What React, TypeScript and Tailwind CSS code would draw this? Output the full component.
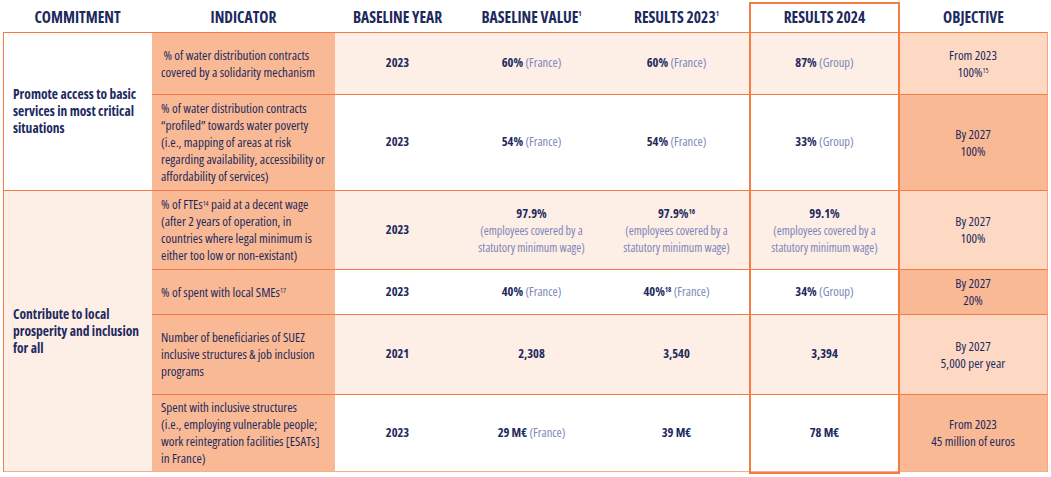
import React from "react";

const font = { fontFamily: '"Open Sans", sans-serif' };

type Row = {
  indicator: React.ReactNode;
  year: string;
  base: React.ReactNode;
  r23: React.ReactNode;
  r24: React.ReactNode;
  obj: React.ReactNode;
  light: boolean;
};

function Val({ v, sup, note }: { v: string; sup?: string; note?: string }) {
  return (
    <span>
      <b className="font-bold">{v}</b>
      {sup && <sup className="text-[7px] font-bold">{sup}</sup>}
      {note && <span className="text-[#7b87b8]"> {note}</span>}
    </span>
  );
}

function Wage({ v, sup }: { v: string; sup?: string }) {
  return (
    <div className="flex flex-col items-center text-[12px] leading-[17px]">
      <span className="text-[12.5px] font-bold">
        {v}
        {sup && <sup className="text-[7px]">{sup}</sup>}
      </span>
      <span className="text-[#7b87b8]">(employees covered by a</span>
      <span className="text-[#7b87b8]">statutory minimum wage)</span>
    </div>
  );
}

const rows: Row[] = [
  {
    indicator: (
      <>
        &nbsp;% of water distribution contracts
        <br />
        covered by a solidarity mechanism
      </>
    ),
    year: "2023",
    base: <Val v="60%" note="(France)" />,
    r23: <Val v="60%" note="(France)" />,
    r24: <Val v="87%" note="(Group)" />,
    obj: (
      <>
        From 2023
        <br />
        100%<sup className="text-[7px]">15</sup>
      </>
    ),
    light: true,
  },
  {
    indicator: (
      <>
        % of water distribution contracts
        <br />
        “profiled” towards water poverty
        <br />
        (i.e., mapping of areas at risk
        <br />
        regarding availability, accessibility or
        <br />
        affordability of services)
      </>
    ),
    year: "2023",
    base: <Val v="54%" note="(France)" />,
    r23: <Val v="54%" note="(France)" />,
    r24: <Val v="33%" note="(Group)" />,
    obj: (
      <>
        By 2027
        <br />
        100%
      </>
    ),
    light: false,
  },
  {
    indicator: (
      <>
        % of FTEs<sup className="text-[7px]">14</sup> paid at a decent wage
        <br />
        (after 2 years of operation, in
        <br />
        countries where legal minimum is
        <br />
        either too low or non-existant)
      </>
    ),
    year: "2023",
    base: <Wage v="97.9%" />,
    r23: <Wage v="97.9%" sup="16" />,
    r24: <Wage v="99.1%" />,
    obj: (
      <>
        By 2027
        <br />
        100%
      </>
    ),
    light: true,
  },
  {
    indicator: (
      <>
        % of spent with local SMEs<sup className="text-[7px]">17</sup>
      </>
    ),
    year: "2023",
    base: <Val v="40%" note="(France)" />,
    r23: <Val v="40%" sup="18" note="(France)" />,
    r24: <Val v="34%" note="(Group)" />,
    obj: (
      <>
        By 2027
        <br />
        20%
      </>
    ),
    light: false,
  },
  {
    indicator: (
      <>
        Number of beneficiaries of SUEZ
        <br />
        inclusive structures &amp; job inclusion
        <br />
        programs
      </>
    ),
    year: "2021",
    base: <Val v="2,308" />,
    r23: <Val v="3,540" />,
    r24: <Val v="3,394" />,
    obj: (
      <>
        By 2027
        <br />
        5,000 per year
      </>
    ),
    light: true,
  },
  {
    indicator: (
      <>
        Spent with inclusive structures
        <br />
        (i.e., employing vulnerable people;
        <br />
        work reintegration facilities [ESATs]
        <br />
        in France)
      </>
    ),
    year: "2023",
    base: <Val v="29 M€" note="(France)" />,
    r23: <Val v="39 M€" />,
    r24: <Val v="78 M€" />,
    obj: (
      <>
        From 2023
        <br />
        45 million of euros
      </>
    ),
    light: false,
  },
];

const heads = [
  "COMMITMENT",
  "INDICATOR",
  "BASELINE YEAR",
  "BASELINE VALUE",
  "RESULTS 2023",
  "RESULTS 2024",
  "OBJECTIVE",
];

export default function App() {
  return (
    <div
      className="relative h-[477px] w-[1051px] overflow-hidden bg-white text-[#1d2a5e] font-stretch-[75%] whitespace-nowrap"
      style={font}
    >
      <div className="ml-[3px] grid grid-cols-[149px_183px_125px_143px_147px_149px_149px] grid-rows-[32px_62px_96px_79px_45px_80px_78px]">
        {heads.map((h, i) => (
          <div key={h} className="flex items-center justify-center pt-[3px] text-[15.5px] font-bold">
            {h}
            {(i === 3 || i === 4) && <sup className="text-[7px]">1</sup>}
          </div>
        ))}

        <div className="row-span-2 flex items-center border-t border-l border-[#f47c44] bg-white pl-[9px] text-[13.5px] font-bold leading-[17px]">
          <span>
            Promote access to basic
            <br />
            services in most critical
            <br />
            situations
          </span>
        </div>
        {rows.slice(0, 2).map((r, i) => (
          <Cells key={i} r={r} last={false} />
        ))}
        <div className="row-span-4 flex items-center border-t border-b border-l border-[#f47c44] border-b-[#f8ad88] bg-[#fdeee6] pl-[9px] text-[13.5px] font-bold leading-[17px]">
          <span>
            Contribute to local
            <br />
            prosperity and inclusion
            <br />
            for all
          </span>
        </div>
        {rows.slice(2).map((r, i) => (
          <Cells key={i} r={r} last={i === 3} />
        ))}
      </div>
      <div className="pointer-events-none absolute left-[749px] top-[2px] h-[472px] w-[151px] border-2 border-[#f47c44]" />
    </div>
  );
}

function Cells({ r, last }: { r: Row; last: boolean }) {
  const rowBg = r.light ? "bg-[#fdeee6]" : "bg-white";
  const b = "border-t border-[#f47c44]" + (last ? " border-b border-b-[#f8ad88]" : "");
  return (
    <>
      <div className={`${b} flex items-center bg-[#f9b994] pl-[9px] text-[13px] leading-[17px]`}>
        <span>{r.indicator}</span>
      </div>
      <div className={`${b} ${rowBg} flex items-center justify-center text-[12.5px] font-bold`}>{r.year}</div>
      <div className={`${b} ${rowBg} flex items-center justify-center text-center text-[12.5px]`}>{r.base}</div>
      <div className={`${b} ${rowBg} flex items-center justify-center text-center text-[12.5px]`}>{r.r23}</div>
      <div className={`${b} ${rowBg} flex items-center justify-center text-center text-[12.5px]`}>{r.r24}</div>
      <div
        className={`${b} border-r border-r-[#f8a47c] ${
          r.light ? "bg-[#fdd9c4]" : "bg-[#f9b994]"
        } flex items-center justify-center text-center text-[13px] leading-[17px]`}
      >
        <span>{r.obj}</span>
      </div>
    </>
  );
}
